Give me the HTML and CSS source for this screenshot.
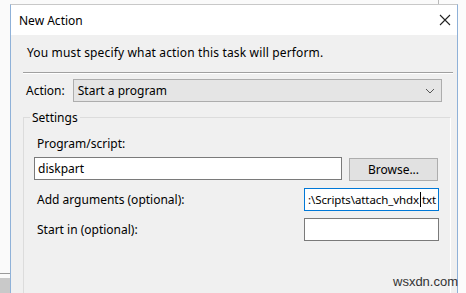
FILE: index.html
```html
<!DOCTYPE html>
<html>
<head>
    <title>New Action</title>
    <link rel="stylesheet" href="styles.css">
</head>
<body>
    <div class="desk">
        <div class="back-window">
            <div class="back-bar"></div>
        </div>

        <div class="dialog">
            <div class="titlebar">
                <span class="title">New Action</span>
                <svg class="close" width="12" height="12" viewBox="0 0 12 12">
                    <path d="M1 1 L11 11 M11 1 L1 11" stroke="#222" stroke-width="1.1" fill="none"/>
                </svg>
            </div>

            <div class="content">
                <p class="intro">You must specify what action this task will perform.</p>
                <div class="separator"></div>

                <div class="action-row">
                    <span class="label">Action:</span>
                    <div class="select">
                        <span>Start a program</span>
                        <svg width="10" height="6" viewBox="0 0 10 6">
                            <path d="M1 1 L5 5 L9 1" stroke="#555" stroke-width="1" fill="none"/>
                        </svg>
                    </div>
                </div>

                <div class="settings">
                    <span class="legend">Settings</span>

                    <span class="label prog-label">Program/script:</span>
                    <div class="prog-row">
                        <div class="field wide">diskpart</div>
                        <button class="browse">Browse...</button>
                    </div>

                    <div class="opt-row">
                        <span class="label">Add arguments (optional):</span>
                        <div class="field small focused">
                            <span>:\Scripts\attach_vhdx</span><span class="caret"></span><span>txt</span>
                        </div>
                    </div>

                    <div class="opt-row">
                        <span class="label">Start in (optional):</span>
                        <div class="field small"></div>
                    </div>
                </div>
            </div>
        </div>
        <span class="watermark">wsxdn.com</span>
    </div>
</body>
</html>
```

FILE: styles.css
```css
body {
    margin: 0;
    font-family: "Noto Sans", "Open Sans", sans-serif;
    font-size: 12px;
    color: #000;
    background: #fbfbfb;
    overflow: hidden;
}

.desk {
    position: relative;
    height: 293px;
    padding: 4px 0 0 10px;
    box-sizing: border-box;
    overflow: hidden;
}

/* window behind the dialog */
.back-window {
    position: absolute;
    left: -1px;
    top: -10px;
    width: 438px;
    height: 400px;
    border: 1px solid #b9b9b9;
    background: #fafafa;
}

.back-bar {
    position: absolute;
    left: 0;
    top: 282px;
    width: 10px;
    height: 30px;
    border-top: 1px solid #9a9a9a;
    background: linear-gradient(#fafafa 0 4px, #c9c9c9 4px);
}

.dialog {
    position: relative;
    width: 448px;
    height: 289px;
    border: 1px solid #8fb1d8;
    border-top-color: #c8c8c8;
    border-bottom: none;
    background: #f0f0f0;
    box-sizing: border-box;
    overflow: hidden;
}

.titlebar {
    background: white;
    height: 30px;
    display: flex;
    align-items: center;
    justify-content: space-between;
    padding: 0 6px 0 8px;
}

.content {
    padding: 10px 4px 0 12px;
}

.intro {
    margin: 0 0 11px 4px;
    line-height: 16px;
    letter-spacing: 0.15px;
}

.separator {
    height: 1px;
    background: #a0a0a0;
    border-bottom: 1px solid #fff;
}

.action-row {
    display: flex;
    align-items: center;
    margin-top: 5px;
    gap: 8px;
    padding-left: 3px;
}

.select {
    width: 369px;
    height: 23px;
    box-sizing: border-box;
    background: #e5e5e5;
    border: 1px solid #adadad;
    display: flex;
    align-items: center;
    justify-content: space-between;
    padding: 0 6px 0 4px;
}

.settings {
    position: relative;
    margin-top: 15px;
    margin-right: 2px;
    height: 200px;
    border: 1px solid #dcdcdc;
    border-right-color: #fff;
    padding: 18px 0 0 10px;
}

.legend {
    position: absolute;
    top: -9px;
    left: 6px;
    padding: 0 2px;
    background: #f0f0f0;
}

.prog-label {
    display: block;
    margin-left: 3px;
    line-height: 16px;
}

.prog-row {
    display: flex;
    align-items: center;
    gap: 7px;
    margin-top: 4px;
}

.field {
    height: 23px;
    box-sizing: border-box;
    background: white;
    border: 1px solid #7a7a7a;
    display: flex;
    align-items: center;
    padding: 0 3px;
    white-space: nowrap;
}

.wide {
    width: 308px;
}

.small {
    width: 135px;
    justify-content: flex-end;
    padding: 0 2px;
    font-size: 11.5px;
    letter-spacing: -0.1px;
}

.focused {
    border-color: #0078d7;
}

.caret {
    display: inline-block;
    width: 1px;
    height: 15px;
    background: #000;
    margin: 0 1px;
}

.browse {
    width: 89px;
    height: 23px;
    font-family: inherit;
    font-size: 12px;
    background: #e1e1e1;
    border: 1px solid #adadad;
    margin-top: 2px;
}

.opt-row {
    display: flex;
    align-items: center;
    justify-content: space-between;
    width: 405px;
    margin-top: 7px;
}

.opt-row .label {
    margin-left: 3px;
}

.watermark {
    position: absolute;
    left: 393px;
    top: 274px;
    font-family: "Liberation Sans", sans-serif;
    font-size: 13px;
    color: #333;
}
```
